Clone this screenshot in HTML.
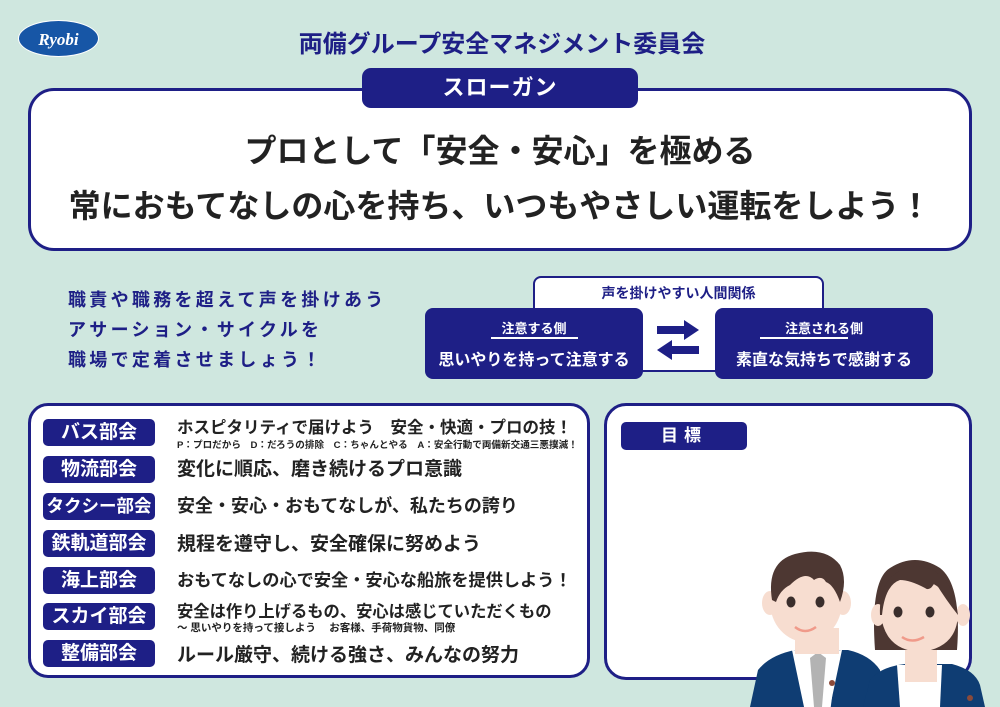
<!DOCTYPE html>
<html><head><meta charset="utf-8"><style>
*{margin:0;padding:0;box-sizing:border-box}
body{width:1000px;height:707px;background:#cfe7df;position:relative;overflow:hidden;font-family:"Liberation Sans","Noto Sans CJK JP",sans-serif;font-weight:bold}
.a{position:absolute}
.nv{background:#1e1f86;color:#fff}
.lbl{position:absolute;left:43px;width:112px;height:27px;border-radius:5px;background:#1e1f86;color:#fff;font-size:19px;text-align:center;line-height:27px;white-space:nowrap}
.t{position:absolute;left:177px;font-size:19px;color:#222;white-space:nowrap}
.s{position:absolute;left:177px;font-size:9.6px;color:#222;white-space:nowrap}
</style></head><body>
<div class="a" style="left:18px;top:20px;width:81px;height:37px;border-radius:50%;background:#1756a6;border:1.5px solid #fff;color:#fff;font-family:'Liberation Serif',serif;font-style:italic;font-size:17px;text-align:center;line-height:38px">Ryobi</div>
<div class="a" style="left:0;width:1000px;top:24px;text-align:center;font-size:24px;color:#1e1f86;padding-left:4px">両備グループ安全マネジメント委員会</div>

<div class="a" style="left:28px;top:88px;width:944px;height:163px;border:3px solid #1e1f86;border-radius:26px;background:#fff"></div>
<div class="a nv" style="left:362px;top:68px;width:276px;height:40px;border-radius:9px;font-size:22px;text-align:center;line-height:40px;letter-spacing:1px">スローガン</div>
<div class="a" style="left:0;width:1000px;top:126px;text-align:center;font-size:32px;color:#222">プロとして「安全・安心」を極める</div>
<div class="a" style="left:0;width:1000px;top:181px;text-align:center;font-size:32px;color:#222">常におもてなしの心を持ち、いつもやさしい運転をしよう！</div>

<div class="a" style="left:68px;top:285px;font-size:18px;color:#1e1f86;line-height:30px;letter-spacing:3.3px">職責や職務を超えて声を掛けあう<br>アサーション・サイクルを<br>職場で定着させましょう！</div>

<div class="a" style="left:533px;top:276px;width:291px;height:96px;background:#fff;border:2px solid #1e1f86;border-radius:8px"></div>
<div class="a" style="left:533px;top:283px;width:291px;text-align:center;font-size:14px;color:#1e1f86">声を掛けやすい人間関係</div>
<div class="a nv" style="left:425px;top:308px;width:218px;height:71px;border-radius:8px"></div>
<div class="a" style="left:425px;top:318px;width:218px;text-align:center;color:#fff;font-size:13px">注意する側</div>
<div class="a" style="left:491px;top:337px;width:87px;height:2px;background:#fff"></div>
<div class="a" style="left:425px;top:346px;width:218px;text-align:center;color:#fff;font-size:16px">思いやりを持って注意する</div>
<div class="a nv" style="left:715px;top:308px;width:218px;height:71px;border-radius:8px"></div>
<div class="a" style="left:715px;top:318px;width:218px;text-align:center;color:#fff;font-size:13px">注意される側</div>
<div class="a" style="left:760px;top:337px;width:88px;height:2px;background:#fff"></div>
<div class="a" style="left:715px;top:346px;width:218px;text-align:center;color:#fff;font-size:16px">素直な気持ちで感謝する</div>
<svg class="a" style="left:640px;top:320px" width="80" height="45" viewBox="0 0 80 45"><path d="M17 6h27v-6l15 10-15 10v-6h-27z" fill="#1e1f86"/><path d="M59 26h-27v-6l-15 10 15 10v-6h27z" fill="#1e1f86"/></svg>

<div class="a" style="left:28px;top:403px;width:562px;height:275px;border:3px solid #1e1f86;border-radius:20px;background:#fff"></div>
<div class="lbl" style="top:419px">バス部会</div><div class="t" style="top:414px;font-size:16.5px">ホスピタリティで届けよう　安全・快適・プロの技！</div>
<div class="s" style="top:437px">P：プロだから　D：だろうの排除　C：ちゃんとやる　A：安全行動で両備新交通三悪撲滅！</div>
<div class="lbl" style="top:456px">物流部会</div><div class="t" style="top:454px">変化に順応、磨き続けるプロ意識</div>
<div class="lbl" style="top:493px;font-size:17.5px">タクシー部会</div><div class="t" style="top:492px;font-size:18px">安全・安心・おもてなしが、私たちの誇り</div>
<div class="lbl" style="top:530px">鉄軌道部会</div><div class="t" style="top:529px">規程を遵守し、安全確保に努めよう</div>
<div class="lbl" style="top:567px">海上部会</div><div class="t" style="top:566px;font-size:17.2px">おもてなしの心で安全・安心な船旅を提供しよう！</div>
<div class="lbl" style="top:603px">スカイ部会</div><div class="t" style="top:598px;font-size:16.3px">安全は作り上げるもの、安心は感じていただくもの</div>
<div class="s" style="top:620px;font-size:10.5px">～ 思いやりを持って接しよう　 お客様、手荷物貨物、同僚</div>
<div class="lbl" style="top:640px">整備部会</div><div class="t" style="top:640px">ルール厳守、続ける強さ、みんなの努力</div>

<div class="a" style="left:604px;top:403px;width:368px;height:277px;border:3px solid #1e1f86;border-radius:22px;background:#fff"></div>
<div class="a nv" style="left:621px;top:422px;width:126px;height:28px;border-radius:5px;font-size:17px;text-align:center;line-height:28px;letter-spacing:6px">目標</div>

<svg class="a" style="left:740px;top:540px" width="260" height="167" viewBox="0 0 260 167">
<path d="M10 167 L18 130 Q30 115 55 110 L108 110 Q130 115 140 130 L145 167Z" fill="#0f3d73"/>
<path d="M52 110 L78 112 L102 110 L90 167 L64 167Z" fill="#fff"/>
<path d="M60 120 L66 167 M96 120 L90 167" stroke="#fff" stroke-width="1.5" fill="none"/>
<path d="M70 118 L78 112 L86 118 L82 167 L74 167Z" fill="#b3b3b3"/>
<rect x="55" y="88" width="44" height="26" fill="#f7ddd0"/>
<ellipse cx="30" cy="63" rx="8" ry="12" fill="#f7ddd0"/><ellipse cx="103" cy="63" rx="8" ry="12" fill="#f7ddd0"/>
<ellipse cx="66" cy="62" rx="36" ry="40" fill="#f7ddd0"/>
<path d="M32 60 Q26 22 55 14 Q85 6 100 25 Q108 40 100 62 Q94 45 86 42 Q82 35 74 40 Q65 30 50 45 Q40 50 36 62Z" fill="#4d3732"/>
<ellipse cx="51" cy="62" rx="4.5" ry="5.5" fill="#3a2e2c"/><ellipse cx="80" cy="62" rx="4.5" ry="5.5" fill="#3a2e2c"/>
<path d="M55 87 Q65 95 76 87" stroke="#f09a8a" stroke-width="2.5" fill="none"/>
<circle cx="92" cy="143" r="3" fill="#8b4a3a"/>
<g transform="translate(-10,0)">
<path d="M133 167 L140 140 Q150 127 175 124 L222 124 Q245 130 250 145 L255 167Z" fill="#0f3d73"/>
<path d="M167 125 L212 125 L210 167 L170 167Z" fill="#fff"/>
<rect x="175" y="100" width="32" height="42" fill="#f7ddd0"/>
<path d="M145 110 Q140 40 160 28 Q185 12 210 28 Q232 45 227 110Z" fill="#4d3732"/>
<ellipse cx="148" cy="75" rx="7" ry="11" fill="#f7ddd0"/><ellipse cx="233" cy="75" rx="7" ry="11" fill="#f7ddd0"/>
<path d="M151 75 Q150 40 175 37 Q210 36 228 72 Q228 108 190 112 Q155 110 151 75Z" fill="#f7ddd0"/>
<path d="M150 75 Q148 32 185 26 Q222 28 228 75 Q216 60 205 42 Q200 52 195 48 Q180 40 170 40 Q155 45 152 75Z" fill="#4d3732"/>
<ellipse cx="168" cy="72" rx="4.5" ry="5.5" fill="#3a2e2c"/><ellipse cx="200" cy="72" rx="4.5" ry="5.5" fill="#3a2e2c"/>
<path d="M172 97 Q182 104 194 97" stroke="#f09a8a" stroke-width="2.5" fill="none"/>
<circle cx="240" cy="158" r="3" fill="#8b4a3a"/>
</g>
</svg>
</body></html>
